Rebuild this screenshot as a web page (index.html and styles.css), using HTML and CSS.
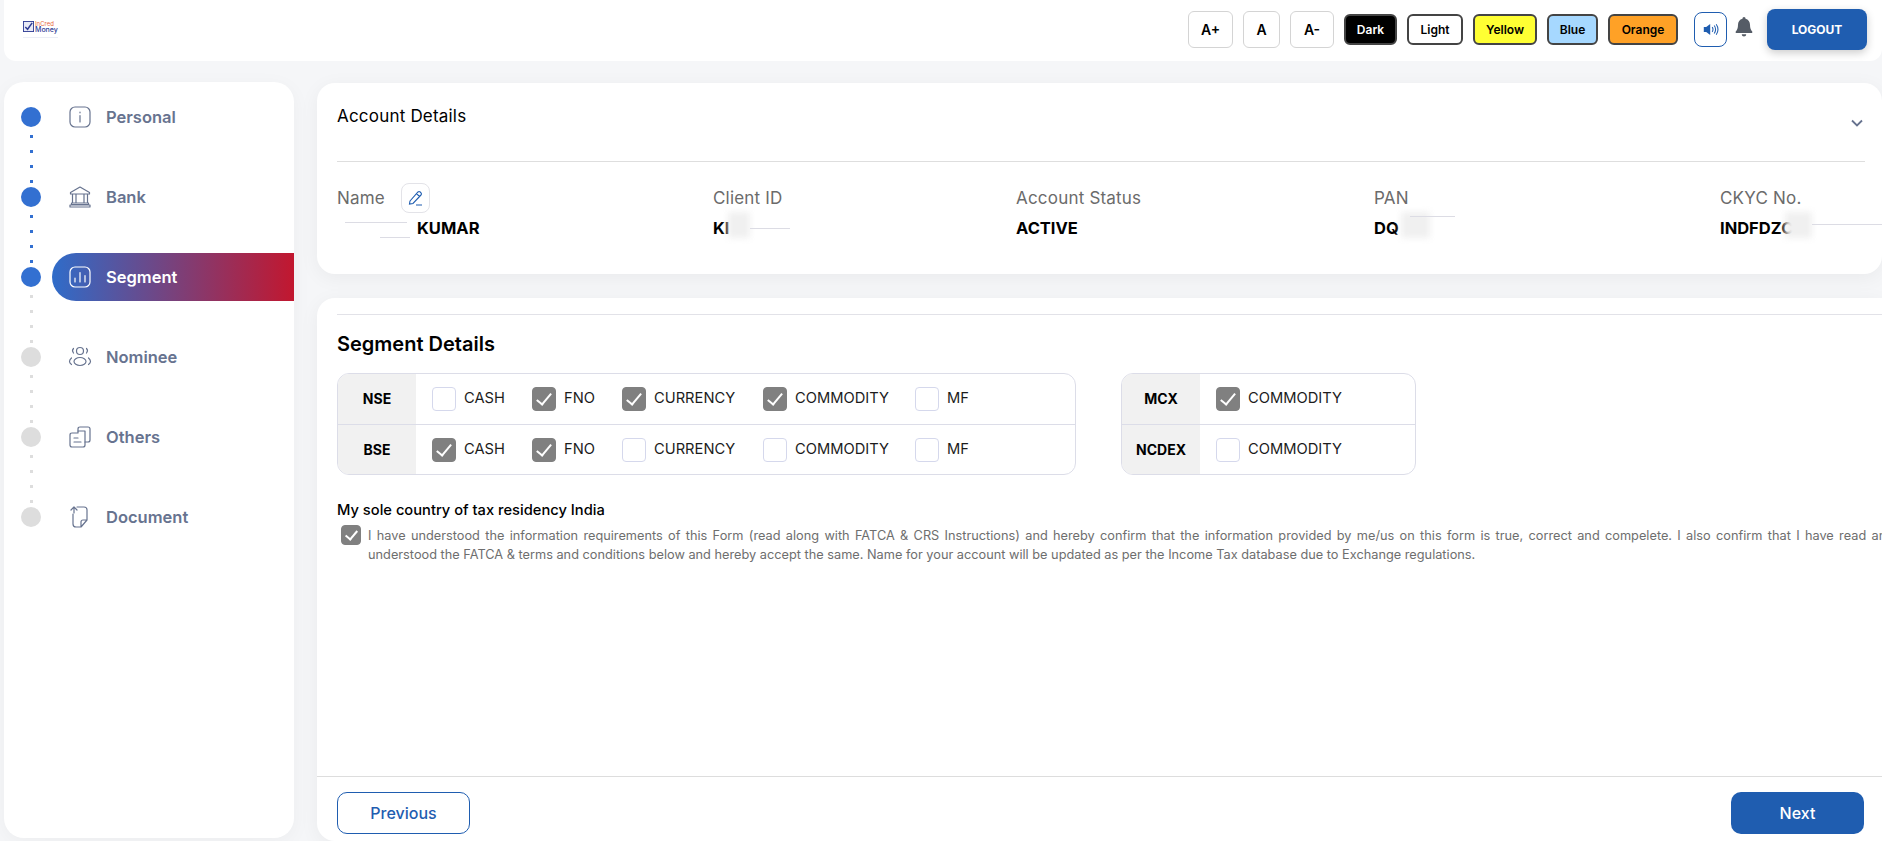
FILE: index.html
```html
<!DOCTYPE html>
<html>
	<head>
		<title>Segment</title>
		<link rel="stylesheet" href="styles.css">
	</head>
	<body>
		<header class="topbar">
			<div class="logo">
				<svg class="logo-box" viewBox="0 0 12 12" width="11" height="11"><rect x="0.5" y="0.5" width="11" height="11" fill="#e8eaf6" stroke="#2f3c94"/><path d="M2.5 6.5 L5 9 L10 2" fill="none" stroke="#2f3c94" stroke-width="1.6"/></svg>
				<div class="logo-text"><span class="logo-top">InCred</span><span class="logo-bottom">Money</span></div>
			</div>
			<div class="tools">
				<button class="size size-plus">A+</button>
				<button class="size size-mid">A</button>
				<button class="size size-minus">A-</button>
				<button class="theme theme-dark">Dark</button>
				<button class="theme theme-light">Light</button>
				<button class="theme theme-yellow">Yellow</button>
				<button class="theme theme-blue">Blue</button>
				<button class="theme theme-orange">Orange</button>
				<button class="sound">
					<svg viewBox="0 0 20 16" width="16" height="13"><path d="M1 5 H4 L9 1 V15 L4 11 H1 Z" fill="#1f5db0"/><path d="M11.5 5 Q13.5 8 11.5 11 M14 3 Q17.5 8 14 13 M16.5 1.500 Q21 8 16.500 14.500" fill="none" stroke="#1f5db0" stroke-width="1.300"/></svg>
				</button>
				<svg class="bell" viewBox="0 0 18 20" width="18" height="20"><path d="M9 0 C8 0 7.500 .8 7.500 1.700 C4.600 2.400 3 4.800 3 7.800 C3 11.500 2.200 12.800 .8 14.400 C.3 15 .7 16 1.600 16 H16.400 C17.300 16 17.700 15 17.200 14.400 C15.800 12.800 15 11.500 15 7.800 C15 4.800 13.400 2.400 10.500 1.700 C10.500 .8 10 0 9 0 Z M6.800 17.200 C6.800 18.500 7.800 19.500 9 19.500 C10.200 19.500 11.200 18.500 11.200 17.200 Z" fill="#555c66"/></svg>
				<button class="logout">LOGOUT</button>
			</div>
		</header>

		<div class="layout">
			<nav class="sidebar">
				<div class="step done">
					<span class="dot"></span>
					<div class="step-link">
						<svg class="step-icon" viewBox="0 0 22 22"><rect x="1" y="1" width="20" height="20" rx="5"/><path d="M11 9.500 V16 M11 6 V6.800"/></svg>
						Personal
					</div>
				</div>
				<div class="dots done"><i></i><i></i><i></i><i></i></div>
				<div class="step done">
					<span class="dot"></span>
					<div class="step-link">
						<svg class="step-icon" viewBox="0 0 22 22"><path d="M11 1 L20.500 6.500 V8 H1.500 V6.500 Z M3.500 8 V17 M7 8 V17 M15 8 V17 M18.500 8 V17 M2.500 17 H19.500 V18.500 H2.500 Z M1 19 H21 V21 H1 Z"/></svg>
						Bank
					</div>
				</div>
				<div class="dots done"><i></i><i></i><i></i><i></i></div>
				<div class="step done current">
					<span class="dot"></span>
					<div class="step-link">
						<svg class="step-icon" viewBox="0 0 22 22"><rect x="1" y="1" width="20" height="20" rx="5"/><path d="M6 12 V16 M11 6.500 V16 M16 9.500 V16"/></svg>
						Segment
					</div>
				</div>
				<div class="dots"><i></i><i></i><i></i><i></i></div>
				<div class="step">
					<span class="dot"></span>
					<div class="step-link">
						<svg class="step-icon step-icon-wide" viewBox="0 0 24 22"><circle cx="12" cy="5" r="3.500"/><ellipse cx="12" cy="15.500" rx="6" ry="4"/><path d="M5.500 2.500 Q3.500 4.500 5.500 7 M18.500 2.500 Q20.500 4.500 18.500 7 M3.500 12 Q-.5 15.500 3.500 18.500 M20.500 12 Q24.500 15.500 20.500 18.500"/></svg>
						Nominee
					</div>
				</div>
				<div class="dots"><i></i><i></i><i></i><i></i></div>
				<div class="step">
					<span class="dot"></span>
					<div class="step-link">
						<svg class="step-icon" viewBox="0 0 22 22"><path d="M9 5 V3 Q9 1 11 1 H19 Q21 1 21 3 V14 Q21 16 19 16 H16"/><path d="M9 5 L16 5 V19 Q16 21 14 21 H3 Q1 21 1 19 V9 Q1 7 3 7 H9 Z M5 12 H9 M5 16 H12"/></svg>
						Others
					</div>
				</div>
				<div class="dots"><i></i><i></i><i></i><i></i></div>
				<div class="step">
					<span class="dot"></span>
					<div class="step-link">
						<svg class="step-icon" viewBox="0 0 22 22"><path d="M8 1 H15 Q18 1 18 4 V14 L12 21 H7 Q4 21 4 18 V8 M18 14 H14 Q12 14 12 16 V21 M5 7 V1.500 M2 4 L5 1 L8 4"/></svg>
						Document
					</div>
				</div>
			</nav>

			<main class="content">
				<section class="card account">
					<div class="account-head">
						<h2>Account Details</h2>
						<svg class="chevron" viewBox="0 0 12 8" width="12" height="8"><path d="M1 1.500 L6 6.500 L11 1.500" fill="none" stroke="#67738f" stroke-width="1.800"/></svg>
					</div>
					<div class="account-grid">
						<div class="field">
							<div class="label">Name <span class="edit"><svg viewBox="0 0 16 16" width="16" height="16"><path d="M3 11 L11 2 Q12 1 13.200 2 L14 2.800 Q15 4 14 5 L6 13.500 L2.500 14 Z M9.500 3.700 L12.500 6.500 M9 15 H15" fill="none" stroke="#1f5db0" stroke-width="1.100"/></svg></span></div>
							<div class="value value-name"><span class="line line-name1"></span><span class="line line-name2"></span>KUMAR</div>
						</div>
						<div class="field">
							<div class="label">Client ID</div>
							<div class="value">KI<span class="smudge smudge-client"></span><span class="line line-client"></span></div>
						</div>
						<div class="field">
							<div class="label">Account Status</div>
							<div class="value">ACTIVE</div>
						</div>
						<div class="field">
							<div class="label">PAN</div>
							<div class="value">DQ<span class="smudge smudge-pan"></span><span class="line line-pan"></span></div>
						</div>
						<div class="field">
							<div class="label">CKYC No.</div>
							<div class="value">INDFDZC<span class="smudge smudge-ckyc"></span><span class="line line-ckyc"></span></div>
						</div>
					</div>
				</section>

				<section class="card segment">
					<div class="segment-body">
						<h1>Segment Details</h1>
						<div class="tables">
							<div class="exch exch-main">
								<div class="exch-row">
									<div class="exch-name">NSE</div>
									<div class="opts">
										<label class="opt"><span class="box"></span>CASH</label>
										<label class="opt"><span class="box on"></span>FNO</label>
										<label class="opt"><span class="box on"></span>CURRENCY</label>
										<label class="opt"><span class="box on"></span>COMMODITY</label>
										<label class="opt"><span class="box"></span>MF</label>
									</div>
								</div>
								<div class="exch-row">
									<div class="exch-name">BSE</div>
									<div class="opts">
										<label class="opt"><span class="box on"></span>CASH</label>
										<label class="opt"><span class="box on"></span>FNO</label>
										<label class="opt"><span class="box"></span>CURRENCY</label>
										<label class="opt"><span class="box"></span>COMMODITY</label>
										<label class="opt"><span class="box"></span>MF</label>
									</div>
								</div>
							</div>
							<div class="exch exch-side">
								<div class="exch-row">
									<div class="exch-name">MCX</div>
									<div class="opts">
										<label class="opt"><span class="box on"></span>COMMODITY</label>
									</div>
								</div>
								<div class="exch-row">
									<div class="exch-name">NCDEX</div>
									<div class="opts">
										<label class="opt"><span class="box"></span>COMMODITY</label>
									</div>
								</div>
							</div>
						</div>
						<h3>My sole country of tax residency India</h3>
						<div class="terms">
							<span class="box on box-small"></span>
							<p>I have understood the information requirements of this Form (read along with FATCA &amp; CRS Instructions) and hereby confirm that the information provided by me/us on this form is true, correct and compelete. I also confirm that I have read and understood the FATCA &amp; terms and conditions below and hereby accept the same. Name for your account will be updated as per the Income Tax database due to Exchange regulations.</p>
						</div>
					</div>
					<div class="footer">
						<button class="btn-prev">Previous</button>
						<button class="btn-next">Next</button>
					</div>
				</section>
			</main>
		</div>
	</body>
</html>
```

FILE: styles.css
```css
body {
	margin: 0;
	width: 1882px;
	height: 841px;
	overflow: hidden;
	background-color: #f5f6f8;
	font-family: "Inter", "Liberation Sans", sans-serif;
	color: #000000;
}

button {
	font-family: inherit;
	cursor: pointer;
	padding: 0;
}

.topbar {
	display: flex;
	align-items: center;
	justify-content: space-between;
	height: 61px;
	margin-left: 4px;
	padding: 0 15px 2px 19px;
	box-sizing: border-box;
	background-color: #ffffff;
	border-radius: 0 0 12px 12px;
}

.logo {
	display: flex;
	align-items: flex-start;
	gap: 1px;
	padding-bottom: 4px;
	border-bottom: 1px solid #eceef6;
}

.logo-text {
	display: flex;
	flex-direction: column;
	line-height: 6px;
}

.logo-top {
	font-size: 6px;
	color: #e8673c;
}

.logo-bottom {
	font-size: 7px;
	font-weight: 500;
	color: #2f3c94;
}

.tools {
	display: flex;
	align-items: center;
	gap: 10px;
}

.size {
	height: 37px;
	font-size: 14px;
	font-weight: 600;
	background-color: #ffffff;
	border: 1px solid #d4d4d4;
	border-radius: 6px;
}

.size-plus { width: 45px; }
.size-mid { width: 37px; }
.size-minus { width: 44px; }

.theme {
	height: 31px;
	font-size: 12px;
	font-weight: 600;
	border: 2px solid #444444;
	border-radius: 6px;
	color: #000000;
}

.theme-dark { width: 53px; background-color: #000000; color: #ffffff; }
.theme-light { width: 56px; background-color: #ffffff; }
.theme-yellow { width: 64px; background-color: #ffff33; }
.theme-blue { width: 51px; background-color: #a6d8ff; }
.theme-orange { width: 70px; background-color: #ffa126; margin-right: 6px; }

.sound {
	display: flex;
	align-items: center;
	justify-content: center;
	width: 33px;
	height: 35px;
	background-color: #ffffff;
	border: 1px solid #1f5db0;
	border-radius: 8px;
	margin-right: -2px;
}

.bell {
	margin-right: 4px;
	margin-bottom: 5px;
}

.logout {
	width: 100px;
	height: 41px;
	font-size: 12px;
	font-weight: 700;
	color: #ffffff;
	background-color: #1f5db0;
	border: none;
	border-radius: 8px;
	box-shadow: 0 3px 8px rgba(0, 0, 0, 0.2);
}

.layout {
	display: flex;
	gap: 23px;
	margin: 21px 0 0 4px;
}

.sidebar {
	box-sizing: border-box;
	width: 290px;
	height: 756px;
	padding-top: 25px;
	background-color: #ffffff;
	border-radius: 20px;
	box-shadow: 0 4px 20px rgba(0, 0, 0, 0.04);
}

.step {
	display: flex;
	align-items: center;
	height: 20px;
	padding-left: 17px;
}

.dot {
	flex: none;
	width: 20px;
	height: 20px;
	border-radius: 50%;
	background-color: #dddddd;
}

.step.done .dot {
	background-color: #3370d1;
}

.step-link {
	display: flex;
	align-items: center;
	gap: 15px;
	flex: 1;
	height: 48px;
	margin-left: 11px;
	padding-left: 17px;
	font-size: 16.500px;
	font-weight: 600;
	color: #67738f;
	border-radius: 24px 0 0 24px;
}

.step.current .step-link {
	color: #ffffff;
	background: linear-gradient(90deg, #2f6cc9 0%, #c2172f 100%);
}

.step-icon {
	width: 22px;
	height: 22px;
	fill: none;
	stroke: #67738f;
	stroke-width: 1.200;
	stroke-linecap: round;
	stroke-linejoin: round;
	overflow: visible;
}

.step-icon-wide {
	width: 24px;
	margin: 0 -1px;
}

.step.current .step-icon {
	stroke: #ffffff;
}

.dots {
	display: flex;
	flex-direction: column;
	gap: 12px;
	height: 60px;
	padding: 8px 0 0 26px;
	box-sizing: border-box;
}

.dots i {
	display: block;
	width: 3px;
	height: 3px;
	background-color: #dddddd;
}

.dots.done i {
	background-color: #3370d1;
}

.content {
	display: flex;
	flex-direction: column;
	gap: 24px;
	width: 1565px;
	margin-top: 1px;
}

.card {
	background-color: #ffffff;
	border-radius: 18px;
	box-shadow: 0 4px 20px rgba(0, 0, 0, 0.05);
}

.account {
	box-sizing: border-box;
	height: 191px;
	padding: 0 17px 0 20px;
	overflow: hidden;
}

.account-head {
	display: flex;
	justify-content: space-between;
	height: 78px;
	border-bottom: 1px solid #dedede;
}

.account-head h2 {
	margin: 22px 0 0 0;
	font-size: 17px;
	line-height: 22px;
	font-weight: 400;
	letter-spacing: 0.2px;
}

.chevron {
	margin: 36px 2px 0 0;
}

.account-grid {
	display: grid;
	grid-template-columns: 376px 303px 358px 346px 200px;
	padding-top: 21px;
}

.label {
	display: flex;
	align-items: center;
	gap: 16px;
	height: 30px;
	font-size: 17px;
	letter-spacing: 0.2px;
	color: #6b6b6b;
}

.edit {
	display: flex;
	align-items: center;
	justify-content: center;
	width: 29px;
	height: 30px;
	box-sizing: border-box;
	border: 1px solid #e3e3e8;
	border-radius: 8px;
}

.value {
	position: relative;
	margin-top: 4px;
	font-size: 16.500px;
	line-height: 22px;
	font-weight: 700;
}

.value-name {
	padding-left: 80px;
}

.smudge {
	position: absolute;
	top: -5px;
	height: 26px;
	background-color: #f0f0f0;
	filter: blur(3px);
}

.line {
	position: absolute;
	height: 1px;
	background-color: #dcdce4;
}

.line-name1 { left: 8px; top: 5px; width: 62px; }
.line-name2 { left: 43px; top: 20px; width: 30px; }
.smudge-client { left: 15px; width: 22px; }
.line-client { left: 37px; top: 11px; width: 40px; }
.smudge-pan { left: 27px; width: 29px; }
.line-pan { left: 36px; top: -1px; width: 45px; }
.smudge-ckyc { left: 65px; width: 27px; }
.line-ckyc { left: 92px; top: 7px; width: 70px; }

.segment {
	display: flex;
	flex-direction: column;
	height: 543px;
	border-radius: 18px 0 0 18px;
	overflow: hidden;
}

.segment-body {
	flex: 1;
	margin: 16px 0 0 20px;
	border-top: 1px solid #e2e2e8;
}

.segment-body h1 {
	margin: 16px 0 0 0;
	font-size: 20px;
	line-height: 26px;
	font-weight: 600;
}

.tables {
	display: flex;
	gap: 45px;
	margin-top: 16px;
}

.exch {
	box-sizing: border-box;
	height: 102px;
	border: 1px solid #dcdde8;
	border-radius: 12px;
	overflow: hidden;
}

.exch-main { width: 739px; }
.exch-side { width: 295px; }

.exch-row {
	display: flex;
	height: 50px;
}

.exch-row + .exch-row {
	border-top: 1px solid #dcdde8;
}

.exch-name {
	display: flex;
	align-items: center;
	justify-content: center;
	flex: none;
	box-sizing: border-box;
	width: 78px;
	padding-bottom: 2px;
	font-size: 14px;
	font-weight: 700;
	background-color: #f1f1f1;
}

.opts {
	display: flex;
	align-items: center;
	padding: 0 0 2px 16px;
}

.opt {
	display: flex;
	align-items: center;
	gap: 8px;
	font-size: 14.700px;
	color: #1c1c1c;
}

.exch-main .opt:nth-child(1) { width: 100px; }
.exch-main .opt:nth-child(2) { width: 90px; }
.exch-main .opt:nth-child(3) { width: 141px; }
.exch-main .opt:nth-child(4) { width: 152px; }

.box {
	position: relative;
	flex: none;
	box-sizing: border-box;
	width: 24px;
	height: 24px;
	margin-top: 2px;
	background-color: #ffffff;
	border: 1px solid #d5d8ec;
	border-radius: 4px;
}

.box.on {
	background-color: #808080;
	border-color: #808080;
}

.box.on::after {
	content: "";
	position: absolute;
	left: 7px;
	top: 2px;
	width: 6px;
	height: 13px;
	border-right: 2px solid #ffffff;
	border-bottom: 2px solid #ffffff;
	transform: rotate(40deg);
}

.box-small {
	width: 20px;
	height: 20px;
	margin-top: 0;
}

.box-small.on::after {
	left: 6px;
	top: 2px;
	width: 5px;
	height: 10px;
	border-width: 2px;
}

.segment-body h3 {
	margin: 26px 0 0 0;
	font-size: 14.700px;
	line-height: 18px;
	font-weight: 500;
}

.terms {
	display: flex;
	gap: 7px;
	margin: 6px 0 0 4px;
}

.terms p {
	flex: none;
	width: 1526px;
	margin: 1px 0 0 0;
	font-size: 12.750px;
	line-height: 19px;
	text-align: justify;
	color: #6e6e6e;
}

.footer {
	display: flex;
	justify-content: space-between;
	flex: none;
	box-sizing: border-box;
	height: 65px;
	padding: 15px 18px 0 20px;
	border-top: 1px solid #dddddd;
}

.btn-prev,
.btn-next {
	width: 133px;
	height: 42px;
	font-size: 16px;
	font-weight: 500;
	border-radius: 10px;
}

.btn-prev {
	color: #1f5db0;
	background-color: #ffffff;
	border: 1px solid #1f5db0;
}

.btn-next {
	color: #ffffff;
	background-color: #1f5db0;
	border: none;
}
```
